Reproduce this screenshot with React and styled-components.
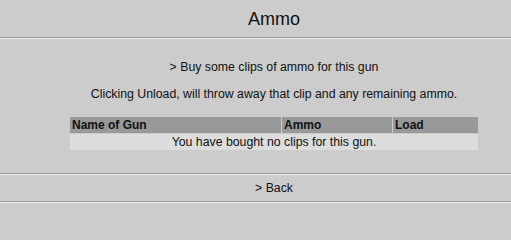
import * as React from 'react';
import styled, { createGlobalStyle } from 'styled-components';

const GlobalStyle = createGlobalStyle`
  html, body {
    margin: 0;
    padding: 0;
    background: #cccccc;
  }
  body {
    font-family: "Liberation Sans", Arial, Helvetica, sans-serif;
    color: #111111;
  }
`;

const Page = styled.div`
  width: 511px;
  min-height: 219px;
  background: #cccccc;
`;

const Divider = styled.div`
  height: 0;
  border-top: 1px solid #999999;
  border-bottom: 1px solid #f2f2f2;
`;

const Header = styled.div`
  height: 37px;
  display: flex;
  align-items: center;
  justify-content: center;
  padding-left: 37px;
  box-sizing: border-box;
`;

const Title = styled.h1`
  margin: 2px 0 0 0;
  font-size: 18px;
  font-weight: normal;
`;

const Body = styled.div`
  display: flex;
  flex-direction: column;
  align-items: center;
  padding: 21px 0 23px 37px;
`;

const Line = styled.p`
  margin: 0 0 ${(props) => props.gap || 0}px 0;
  font-size: 12.3px;
  line-height: 15px;
  text-align: center;
`;

const ActionLink = styled.a`
  color: inherit;
  text-decoration: none;
  cursor: pointer;
`;

const Grid = styled.div`
  width: 408px;
  display: grid;
  grid-template-columns: 211px 110px 85px;
  gap: 1px;
`;

const HeadCell = styled.div`
  background: #999999;
  font-size: 12px;
  font-weight: bold;
  line-height: 16px;
  padding: 0 2px;
`;

const EmptyRow = styled.div`
  grid-column: 1 / -1;
  background: #dddddd;
  font-size: 12.3px;
  line-height: 16px;
  text-align: center;
`;

const Footer = styled.div`
  height: 26px;
  display: flex;
  align-items: center;
  justify-content: center;
  padding-left: 37px;
  font-size: 12.3px;
`;

const App = () => {
  const columns = ['Name of Gun', 'Ammo', 'Load'];

  return (
    <Page>
      <GlobalStyle />
      <Header>
        <Title>Ammo</Title>
      </Header>
      <Divider />
      <Body>
        <Line gap={12}>
          <ActionLink>&gt; Buy some clips of ammo for this gun</ActionLink>
        </Line>
        <Line gap={15}>
          Clicking Unload, will throw away that clip and any remaining ammo.
        </Line>
        <Grid>
          {columns.map((c) => (
            <HeadCell key={c}>{c}</HeadCell>
          ))}
          <EmptyRow>You have bought no clips for this gun.</EmptyRow>
        </Grid>
      </Body>
      <Divider />
      <Footer>
        <ActionLink>&gt; Back</ActionLink>
      </Footer>
      <Divider />
    </Page>
  );
};

export default App;
